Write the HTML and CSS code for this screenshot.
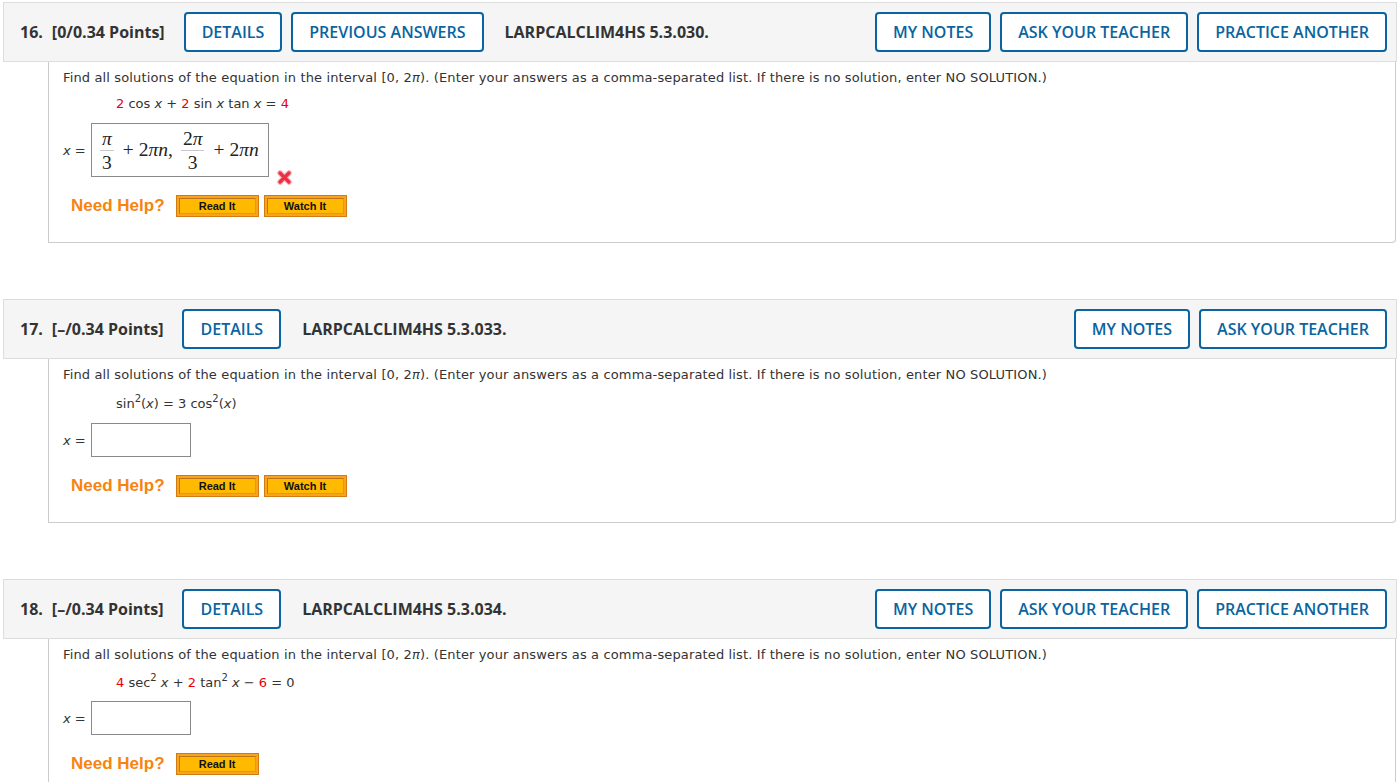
FILE: index.html
```html
<!DOCTYPE html>
<html>
<head>
<meta charset="utf-8">
<link rel="stylesheet" href="styles.css">
</head>
<body>
<div class="page">

  <div class="question">
    <div class="qhead">
      <span class="qnum">16.</span>
      <span class="qpts">[0/0.34 Points]</span>
      <span class="btn">DETAILS</span>
      <span class="btn">PREVIOUS ANSWERS</span>
      <span class="qtitle">LARPCALCLIM4HS 5.3.030.</span>
      <span class="btn push">MY NOTES</span>
      <span class="btn">ASK YOUR TEACHER</span>
      <span class="btn">PRACTICE ANOTHER</span>
    </div>
    <div class="qbody">
      <div class="prompt">Find all solutions of the equation in the interval [0, 2<i>π</i>). (Enter your answers as a comma-separated list. If there is no solution, enter NO SOLUTION.)</div>
      <div class="eq"><span class="r">2</span> cos <i>x</i> + <span class="r">2</span> sin <i>x</i> tan <i>x</i> = <span class="r">4</span></div>
      <div class="answer">
        <span class="xeq"><i>x</i> =</span>
        <span class="box filled">
          <span class="math">
            <span class="frac"><span class="num"><i>π</i></span><span class="den">3</span></span>
            <span class="op">+</span>2<i>πn</i>,
            <span class="frac sp"><span class="num">2<i>π</i></span><span class="den">3</span></span>
            <span class="op">+</span>2<i>πn</i>
          </span>
        </span>
        <svg class="wrong" width="15" height="15" viewBox="0 0 15 15">
          <path d="M3 3 L12 12 M12 3 L3 12" stroke="#f36b78" stroke-width="5.5" stroke-linecap="round" opacity="0.55"/>
          <path d="M3 3 L12 12 M12 3 L3 12" stroke="#ee2f3f" stroke-width="3.2" stroke-linecap="round"/>
        </svg>
      </div>
      <div class="help">
        <span class="needhelp">Need Help?</span>
        <span class="hbtn"><span>Read It</span></span>
        <span class="hbtn"><span>Watch It</span></span>
      </div>
    </div>
  </div>

  <div class="question">
    <div class="qhead">
      <span class="qnum">17.</span>
      <span class="qpts">[–/0.34 Points]</span>
      <span class="btn">DETAILS</span>
      <span class="qtitle">LARPCALCLIM4HS 5.3.033.</span>
      <span class="btn push">MY NOTES</span>
      <span class="btn">ASK YOUR TEACHER</span>
    </div>
    <div class="qbody">
      <div class="prompt">Find all solutions of the equation in the interval [0, 2<i>π</i>). (Enter your answers as a comma-separated list. If there is no solution, enter NO SOLUTION.)</div>
      <div class="eq tall">sin<sup>2</sup>(<i>x</i>) = 3 cos<sup>2</sup>(<i>x</i>)</div>
      <div class="answer">
        <span class="xeq"><i>x</i> =</span>
        <span class="box empty"></span>
      </div>
      <div class="help">
        <span class="needhelp">Need Help?</span>
        <span class="hbtn"><span>Read It</span></span>
        <span class="hbtn"><span>Watch It</span></span>
      </div>
    </div>
  </div>

  <div class="question">
    <div class="qhead">
      <span class="qnum">18.</span>
      <span class="qpts">[–/0.34 Points]</span>
      <span class="btn">DETAILS</span>
      <span class="qtitle">LARPCALCLIM4HS 5.3.034.</span>
      <span class="btn push">MY NOTES</span>
      <span class="btn">ASK YOUR TEACHER</span>
      <span class="btn">PRACTICE ANOTHER</span>
    </div>
    <div class="qbody">
      <div class="prompt">Find all solutions of the equation in the interval [0, 2<i>π</i>). (Enter your answers as a comma-separated list. If there is no solution, enter NO SOLUTION.)</div>
      <div class="eq mid"><span class="r">4</span> sec<sup>2</sup> <i>x</i> + <span class="r">2</span> tan<sup>2</sup> <i>x</i> − <span class="r">6</span> = 0</div>
      <div class="answer">
        <span class="xeq"><i>x</i> =</span>
        <span class="box empty"></span>
      </div>
      <div class="help">
        <span class="needhelp">Need Help?</span>
        <span class="hbtn"><span>Read It</span></span>
      </div>
    </div>
  </div>

</div>
</body>
</html>
```

FILE: styles.css
```css
html, body {
  margin: 0;
  padding: 0;
  background: #fff;
}

.page {
  padding-top: 2px;
}

.question {
  margin: 0 1px 56px 3px;
}

.qhead {
  display: flex;
  align-items: center;
  height: 58px;
  padding: 0 9px 0 16px;
  background: #f5f5f5;
  border: 1px solid #dddddd;
  font-family: "Open Sans", "DejaVu Sans", sans-serif;
  font-size: 16px;
  font-weight: 700;
  color: #333;
}

.qnum {
  margin-right: 9px;
}

.qpts {
  margin-right: 19px;
}

.btn {
  box-sizing: border-box;
  height: 40px;
  display: inline-flex;
  align-items: center;
  padding: 0 16px;
  border: 2px solid #0a64a0;
  border-radius: 4px;
  color: #0a64a0;
  font-weight: 600;
  background: #fff;
  margin-right: 9px;
  white-space: nowrap;
}

.btn:last-child {
  margin-right: 0;
}

.qtitle {
  margin-left: 12px;
}

.push {
  margin-left: auto;
}

.qbody {
  margin: 0 1px 0 45px;
  border: 1px solid #cccccc;
  border-top: none;
  border-bottom-right-radius: 4px;
  padding: 7px 14px 25px 14px;
  font-family: "DejaVu Sans", Verdana, sans-serif;
  font-size: 13px;
  color: #333;
}

.prompt {
  line-height: 18px;
  height: 18px;
  white-space: nowrap;
  letter-spacing: 0.14px;
}

.eq {
  margin: 6px 0 0 53px;
  height: 22px;
  line-height: 22px;
}

.eq.tall {
  height: 25px;
  line-height: 28px;
}

.eq.mid {
  height: 23px;
  line-height: 25px;
}

.eq sup {
  font-size: 10px;
  line-height: 0;
  vertical-align: 6px;
}

.r {
  color: #e8000b;
}

.answer {
  display: flex;
  align-items: center;
  margin-top: 8px;
}

.xeq {
  width: 28px;
}

.box {
  box-sizing: border-box;
  display: inline-flex;
  align-items: center;
  border: 1px solid #8a8a8a;
  background: #fff;
}

.box.empty {
  width: 100px;
  height: 34px;
}

.box.filled {
  width: 178px;
  height: 54px;
  padding: 0 0 0 7px;
}

.math {
  font-family: "Liberation Serif", "Times New Roman", serif;
  font-size: 19.5px;
  color: #222;
  white-space: nowrap;
  display: inline-flex;
  align-items: center;
}

.math i {
  font-style: italic;
}

.frac {
  display: inline-flex;
  flex-direction: column;
  align-items: center;
  line-height: 21px;
  padding: 0 1px;
}

.frac.sp {
  margin-left: 7px;
}

.num {
  border-bottom: 1px solid #c8c8c8;
  padding: 0 2px 1px;
}

.den {
  padding-top: 1px;
}

.op {
  margin: 0 5px 0 8px;
}

.wrong {
  align-self: flex-end;
  margin: 0 0 -8px 8px;
}

.help {
  display: flex;
  align-items: center;
  margin-top: 18px;
  padding-left: 8px;
  height: 22px;
}

.needhelp {
  font-family: "Liberation Sans", Arial, sans-serif;
  font-weight: 700;
  font-size: 17px;
  color: #f7840f;
  margin-right: 11px;
}

.hbtn {
  box-sizing: border-box;
  width: 83px;
  height: 22px;
  padding: 2px;
  background: #f9a31a;
  border: 1px solid #d07c13;
  margin-right: 5px;
  display: inline-flex;
}

.hbtn span {
  flex: 1;
  display: flex;
  align-items: center;
  justify-content: center;
  background: #ffba00;
  border: 1px solid #c0741a;
  border-right-color: #e3961c;
  border-bottom-color: #e3961c;
  font-family: "Liberation Sans", Arial, sans-serif;
  font-weight: 700;
  font-size: 11px;
  color: #111;
}
```
